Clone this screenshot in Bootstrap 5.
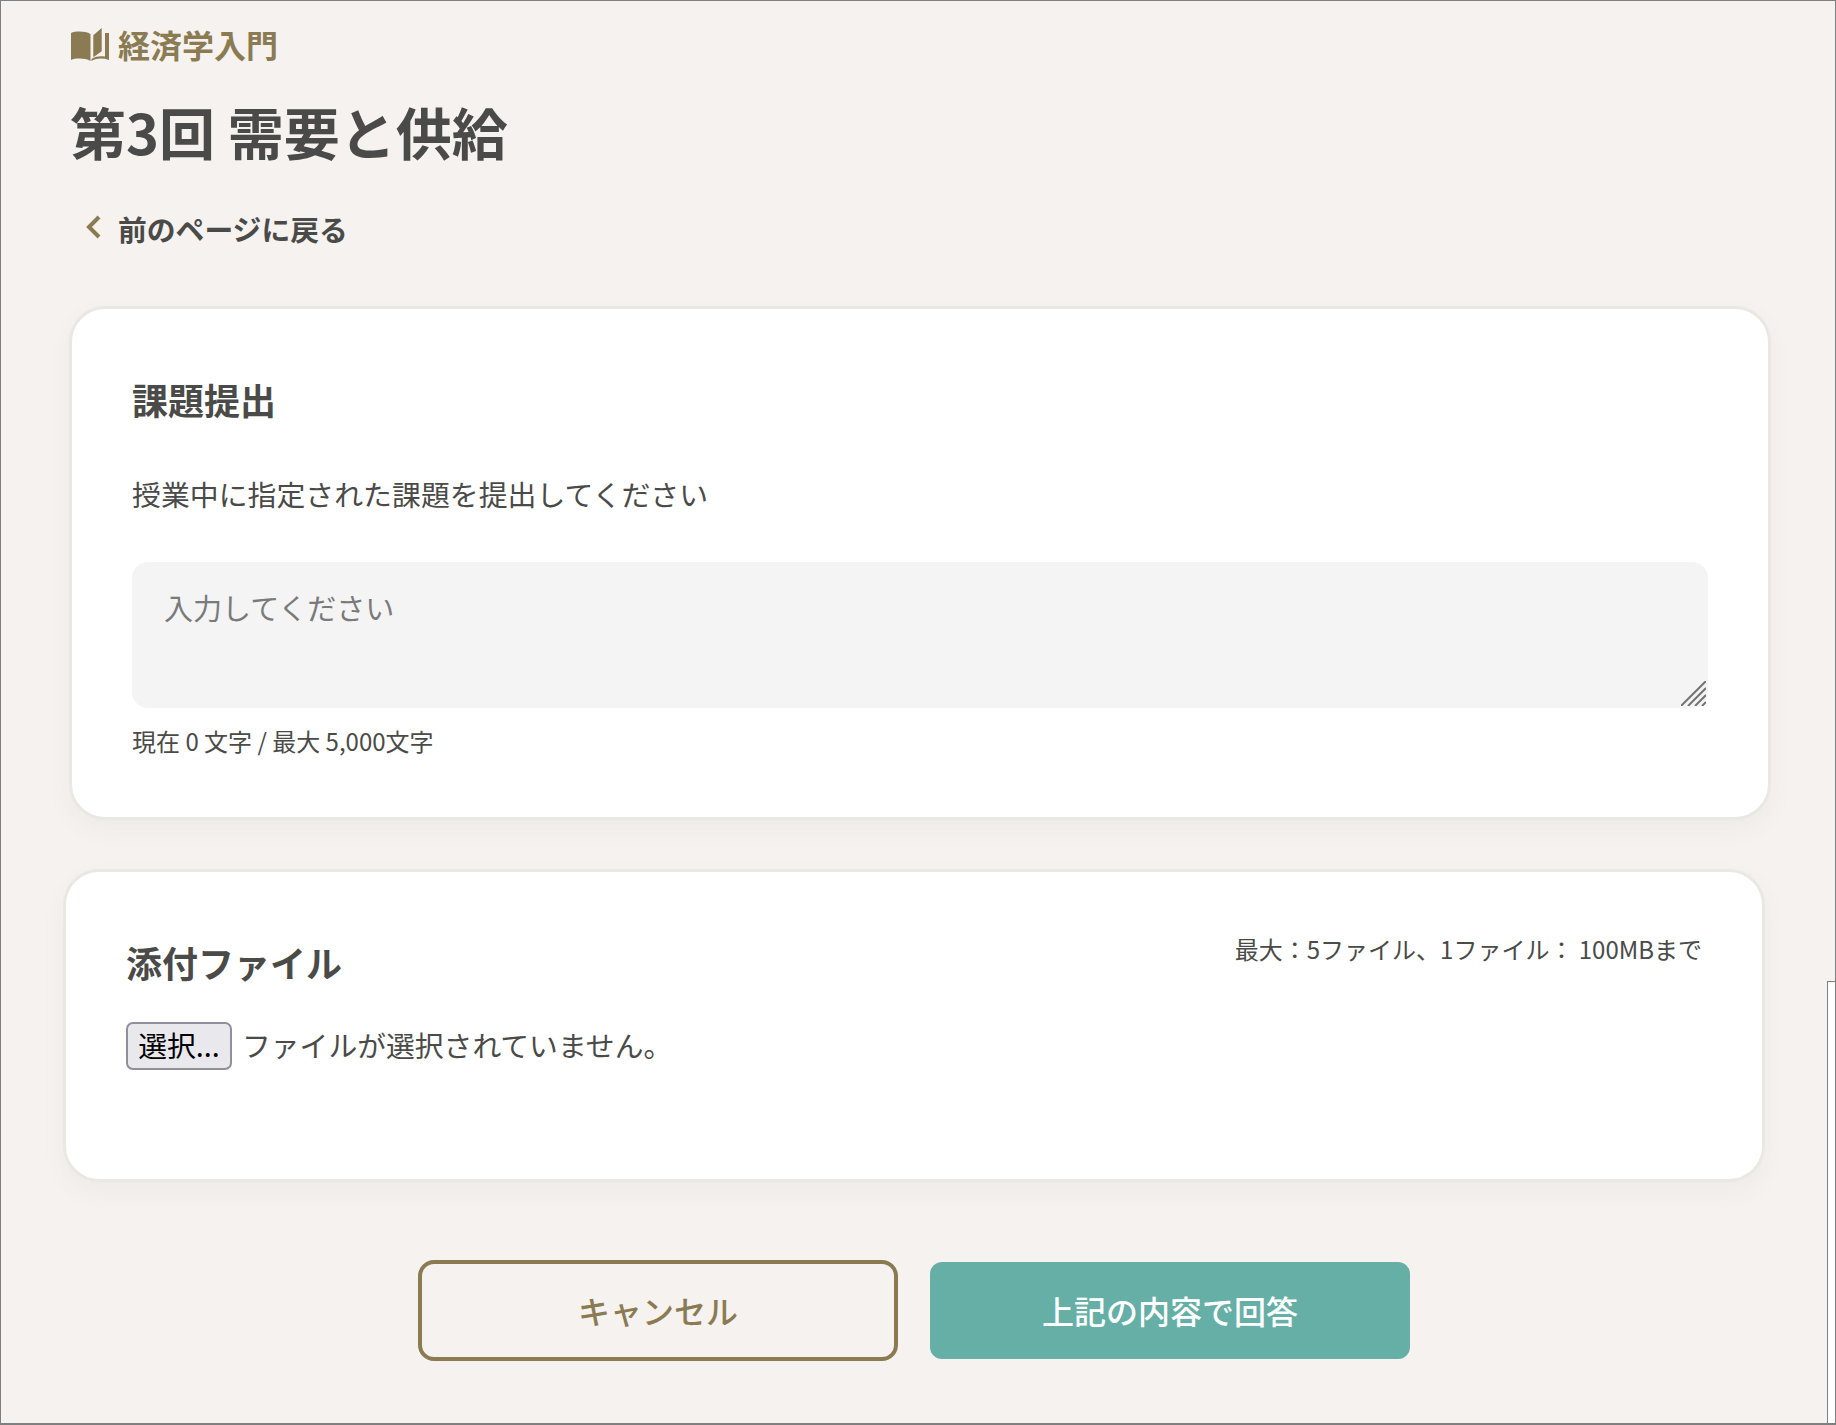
<!DOCTYPE html>
<html lang="ja">
<head>
<meta charset="utf-8">
<title>第3回 需要と供給</title>
<link href="https://cdn.jsdelivr.net/npm/bootstrap@5.3.3/dist/css/bootstrap.min.css" rel="stylesheet">
<script src="https://cdn.jsdelivr.net/npm/bootstrap@5.3.3/dist/js/bootstrap.bundle.min.js"></script>
<style>
body { background: #f5f2ef; color: #4a4a48; font-family: "Noto Sans CJK JP", "Noto Sans", sans-serif; }
.frame { position: relative; height: 1425px; border: 1px solid #7f7f7f; border-bottom-width: 2px; padding: 19px 60px 0 68px; overflow: hidden; }
.head-block { margin-left: 1px; }
.course-link { color: #8b7b52; font-size: 32px; font-weight: 700; line-height: 48px; gap: 9px; margin-left: 1px; }
.course-link svg { width: 38px; height: 33px; }
.page-title { font-size: 56px; font-weight: 700; line-height: 80px; margin: 23px 0 0; color: #4a4a48; }
.back-link { color: #4a4a48; font-size: 28.8px; font-weight: 700; line-height: 40px; margin: 38px 0 0 15px; gap: 15px; text-decoration: none; }
.back-link svg { width: 18px; height: 26px; margin-bottom: 5px; }
.sheet { background: #fff; border: 3px solid #e9e8e2; border-radius: 36px; box-shadow: 0 10px 24px rgba(120, 110, 90, .05); width: 1702px; }
.sheet-one { height: 514px; margin-top: 57px; padding: 64px 60px 0; }
.sheet-two { height: 313px; margin: 49px 0 0 -6px; padding: 64px 60px 0; }
.sheet-title { font-size: 36px; font-weight: 700; line-height: 52px; margin: 0; color: #4a4a48; }
.sheet-lead { font-size: 28.9px; line-height: 42px; margin: 47px 0 0; }
.answer-wrap { position: relative; margin-top: 48px; }
.answer-box.form-control { display: block; height: 146px; background: #f4f4f4; border: 0; border-radius: 16px; padding: 24px 32px; font-size: 29px; line-height: 42px; color: #4a4a48; resize: none; box-shadow: none; }
.answer-box::placeholder { color: #7a7a7a; opacity: 1; }
.grip { position: absolute; right: 2px; bottom: 2px; width: 25px; height: 25px; }
.count-note { font-size: 24px; line-height: 34px; margin: 16px 0 0; }
.limit-note { font-size: 24px; line-height: 34px; margin-top: -4px; }
.pick-row { margin-top: 34px; gap: 10px; font-size: 28.8px; line-height: 46px; }
.pick-btn { background: #e9e9ed; border: 2px solid #8f8f9d; border-radius: 7px; color: #000; height: 48px; width: 106px; padding: 0 0 2px; font-size: 28.8px; line-height: 40px; font-family: "Noto Sans CJK JP", sans-serif; }
.action-row { margin-top: 78px; gap: 32px; padding-left: 349px; align-items: center; }
.btn.cancel-btn, .btn.send-btn { width: 480px; font-size: 32px; font-weight: 500; padding-bottom: 8px; display: flex; align-items: center; justify-content: center; }
.btn.cancel-btn { height: 101px; background: transparent; border: 4px solid #8b7b52; border-radius: 16px; color: #8b7b52; }
.btn.send-btn { height: 97px; background: #66afa7; border: 0; border-radius: 12px; color: #fff; }
.edge-box { position: absolute; right: -1px; top: 980px; width: 9px; height: 460px; background: #fff; border: 1px solid #7f7f7f; }
</style>
</head>
<body>
<div class="frame">
  <div class="head-block">
    <a class="course-link d-flex align-items-center text-decoration-none" href="#">
      <svg viewBox="0 0 38 33" aria-hidden="true">
        <path fill="#8b7b52" d="M0 5C5 3 14 3 19.500 6V33C14 30 5 30 0 32zM22.300 7.300 30.700 0V23.300L22.300 29.300z"/>
        <path fill="#8b7b52" d="M34 5H38V32C32 30 26 30 20.500 33V31C25 28 29 28 34 28.500z"/>
      </svg>
      <span>経済学入門</span>
    </a>
    <h1 class="page-title">第3回 需要と供給</h1>
    <a class="back-link d-inline-flex align-items-center" href="#">
      <svg viewBox="0 0 18 26" aria-hidden="true"><path fill="none" stroke="#8b7b52" stroke-width="4" d="M14 3 4 13l10 10"/></svg>
      <span>前のページに戻る</span>
    </a>
  </div>

  <section class="sheet sheet-one">
    <h2 class="sheet-title">課題提出</h2>
    <p class="sheet-lead">授業中に指定された課題を提出してください</p>
    <div class="answer-wrap">
      <textarea class="form-control answer-box" placeholder="入力してください"></textarea>
      <svg class="grip" viewBox="0 0 25 25" aria-hidden="true"><path stroke="#737373" stroke-width="2" d="M0 25 25 0M7 25 25 7M14 25 25 14M21 25 25 21"/></svg>
    </div>
    <p class="count-note">現在 0 文字 / 最大 5,000文字</p>
  </section>

  <section class="sheet sheet-two">
    <div class="d-flex justify-content-between align-items-start">
      <h2 class="sheet-title">添付ファイル</h2>
      <div class="limit-note">最大：5ファイル、1ファイル： 100MBまで</div>
    </div>
    <div class="pick-row d-flex">
      <button type="button" class="pick-btn">選択...</button>
      <span>ファイルが選択されていません。</span>
    </div>
  </section>

  <div class="action-row d-flex">
    <button type="button" class="btn cancel-btn">キャンセル</button>
    <button type="button" class="btn send-btn">上記の内容で回答</button>
  </div>
  <div class="edge-box"></div>
</div>
</body>
</html>
